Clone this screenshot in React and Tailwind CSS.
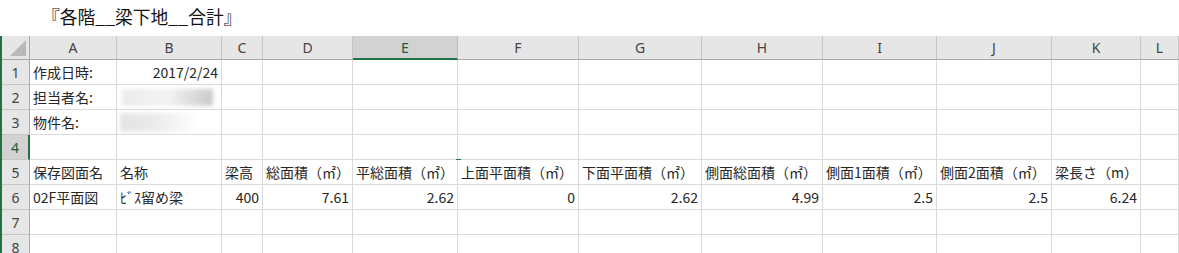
const GRID =
  "grid grid-cols-[28px_87px_105px_41px_90px_105px_121px_123px_121px_114px_115px_89px_1fr]";

const letters = ["A", "B", "C", "D", "E", "F", "G", "H", "I", "J", "K", "L"];

const rows = [
  { n: 1, cells: [{ t: "作成日時:" }, { t: "2017/2/24", r: true }] },
  { n: 2, cells: [{ t: "担当者名:" }, { blur: "b2" }] },
  { n: 3, cells: [{ t: "物件名:" }, { blur: "b3" }] },
  { n: 4, cells: [], sel: true },
  {
    n: 5,
    cells: [
      { t: "保存図面名" },
      { t: "名称" },
      { t: "梁高" },
      { t: "総面積（㎡）" },
      { t: "平総面積（㎡）" },
      { t: "上面平面積（㎡）" },
      { t: "下面平面積（㎡）" },
      { t: "側面総面積（㎡）" },
      { t: "側面1面積（㎡）" },
      { t: "側面2面積（㎡）" },
      { t: "梁長さ（m）" },
    ],
  },
  {
    n: 6,
    cells: [
      { t: "02F平面図" },
      { t: "ﾋﾞｽ留め梁" },
      { t: "400", r: true },
      { t: "7.61", r: true },
      { t: "2.62", r: true },
      { t: "0", r: true },
      { t: "2.62", r: true },
      { t: "4.99", r: true },
      { t: "2.5", r: true },
      { t: "2.5", r: true },
      { t: "6.24", r: true },
    ],
  },
  { n: 7, cells: [] },
  { n: 8, cells: [] },
];

const Cell = ({ cell }) => {
  if (cell?.blur === "b2") {
    return (
      <div className="h-[25px] border-r border-b border-[#dadada] flex items-center">
        <div className="ml-[5px] w-[91px] h-[17px] bg-linear-to-r from-[#ebebeb] via-[#f3f3f3] to-[#c9c9c9] blur-[2px]" />
      </div>
    );
  }
  if (cell?.blur === "b3") {
    return (
      <div className="h-[25px] border-r border-b border-[#dadada] flex items-center">
        <div className="ml-[3px] w-[73px] h-[19px] bg-linear-to-r from-[#e3e3e3] via-[#ececec] to-[#fbfbfb] blur-[2px]" />
      </div>
    );
  }
  return (
    <div
      className={`h-[25px] border-r border-b border-[#dadada] flex items-center px-[3px] whitespace-nowrap ${
        cell?.r ? "justify-end" : "justify-start"
      }`}
    >
      {cell?.t}
    </div>
  );
};

export default function App() {
  return (
    <div className="w-[1179px] h-[253px] overflow-hidden bg-white text-[14px] text-[#262626] font-['Noto_Sans_CJK_JP',sans-serif]">
      <div className="h-[36px] pl-[42px] text-[17.75px] leading-[33px] text-[#111]">
        『各階__梁下地__合計』
      </div>

      <div className="relative border-l-2 border-[#217346]">
        {/* column headers */}
        <div className={`${GRID} h-[24px] bg-[#e6e6e6] text-[#444] font-['Noto_Sans',sans-serif]`}>
          <div className="border-r border-b border-[#a8a8a8] relative">
            <svg className="absolute right-[3px] bottom-[3px]" width="16" height="16" viewBox="0 0 16 16">
              <polygon points="16,0 16,16 0,16" fill="#b9b9b9" />
            </svg>
          </div>
          {letters.map((l) =>
            l === "E" ? (
              <div
                key={l}
                className="flex items-center justify-center border-r border-[#bdbdbd] border-b-2 border-b-[#217346] bg-[#d2d2d2] text-[#1f5e3c]"
              >
                {l}
              </div>
            ) : (
              <div
                key={l}
                className="flex items-center justify-center border-r border-b border-r-[#c6c6c6] border-b-[#a8a8a8]"
              >
                {l}
              </div>
            )
          )}
        </div>

        {rows.map((row) => (
          <div key={row.n} className={GRID}>
            <div
              className={`h-[25px] flex items-center justify-center border-b border-[#c6c6c6] font-['Noto_Sans',sans-serif] ${
                row.sel
                  ? "bg-[#d2d2d2] text-[#1f5e3c] border-r-2 border-r-[#217346]"
                  : "bg-[#e6e6e6] text-[#444] border-r border-r-[#a8a8a8]"
              }`}
            >
              {row.n}
            </div>
            {letters.map((l, i) => (
              <Cell key={l} cell={row.cells[i]} />
            ))}
          </div>
        ))}

        <div className="absolute left-[454px] top-[123px] w-[5px] h-px bg-[#217346]" />
      </div>
    </div>
  );
}
